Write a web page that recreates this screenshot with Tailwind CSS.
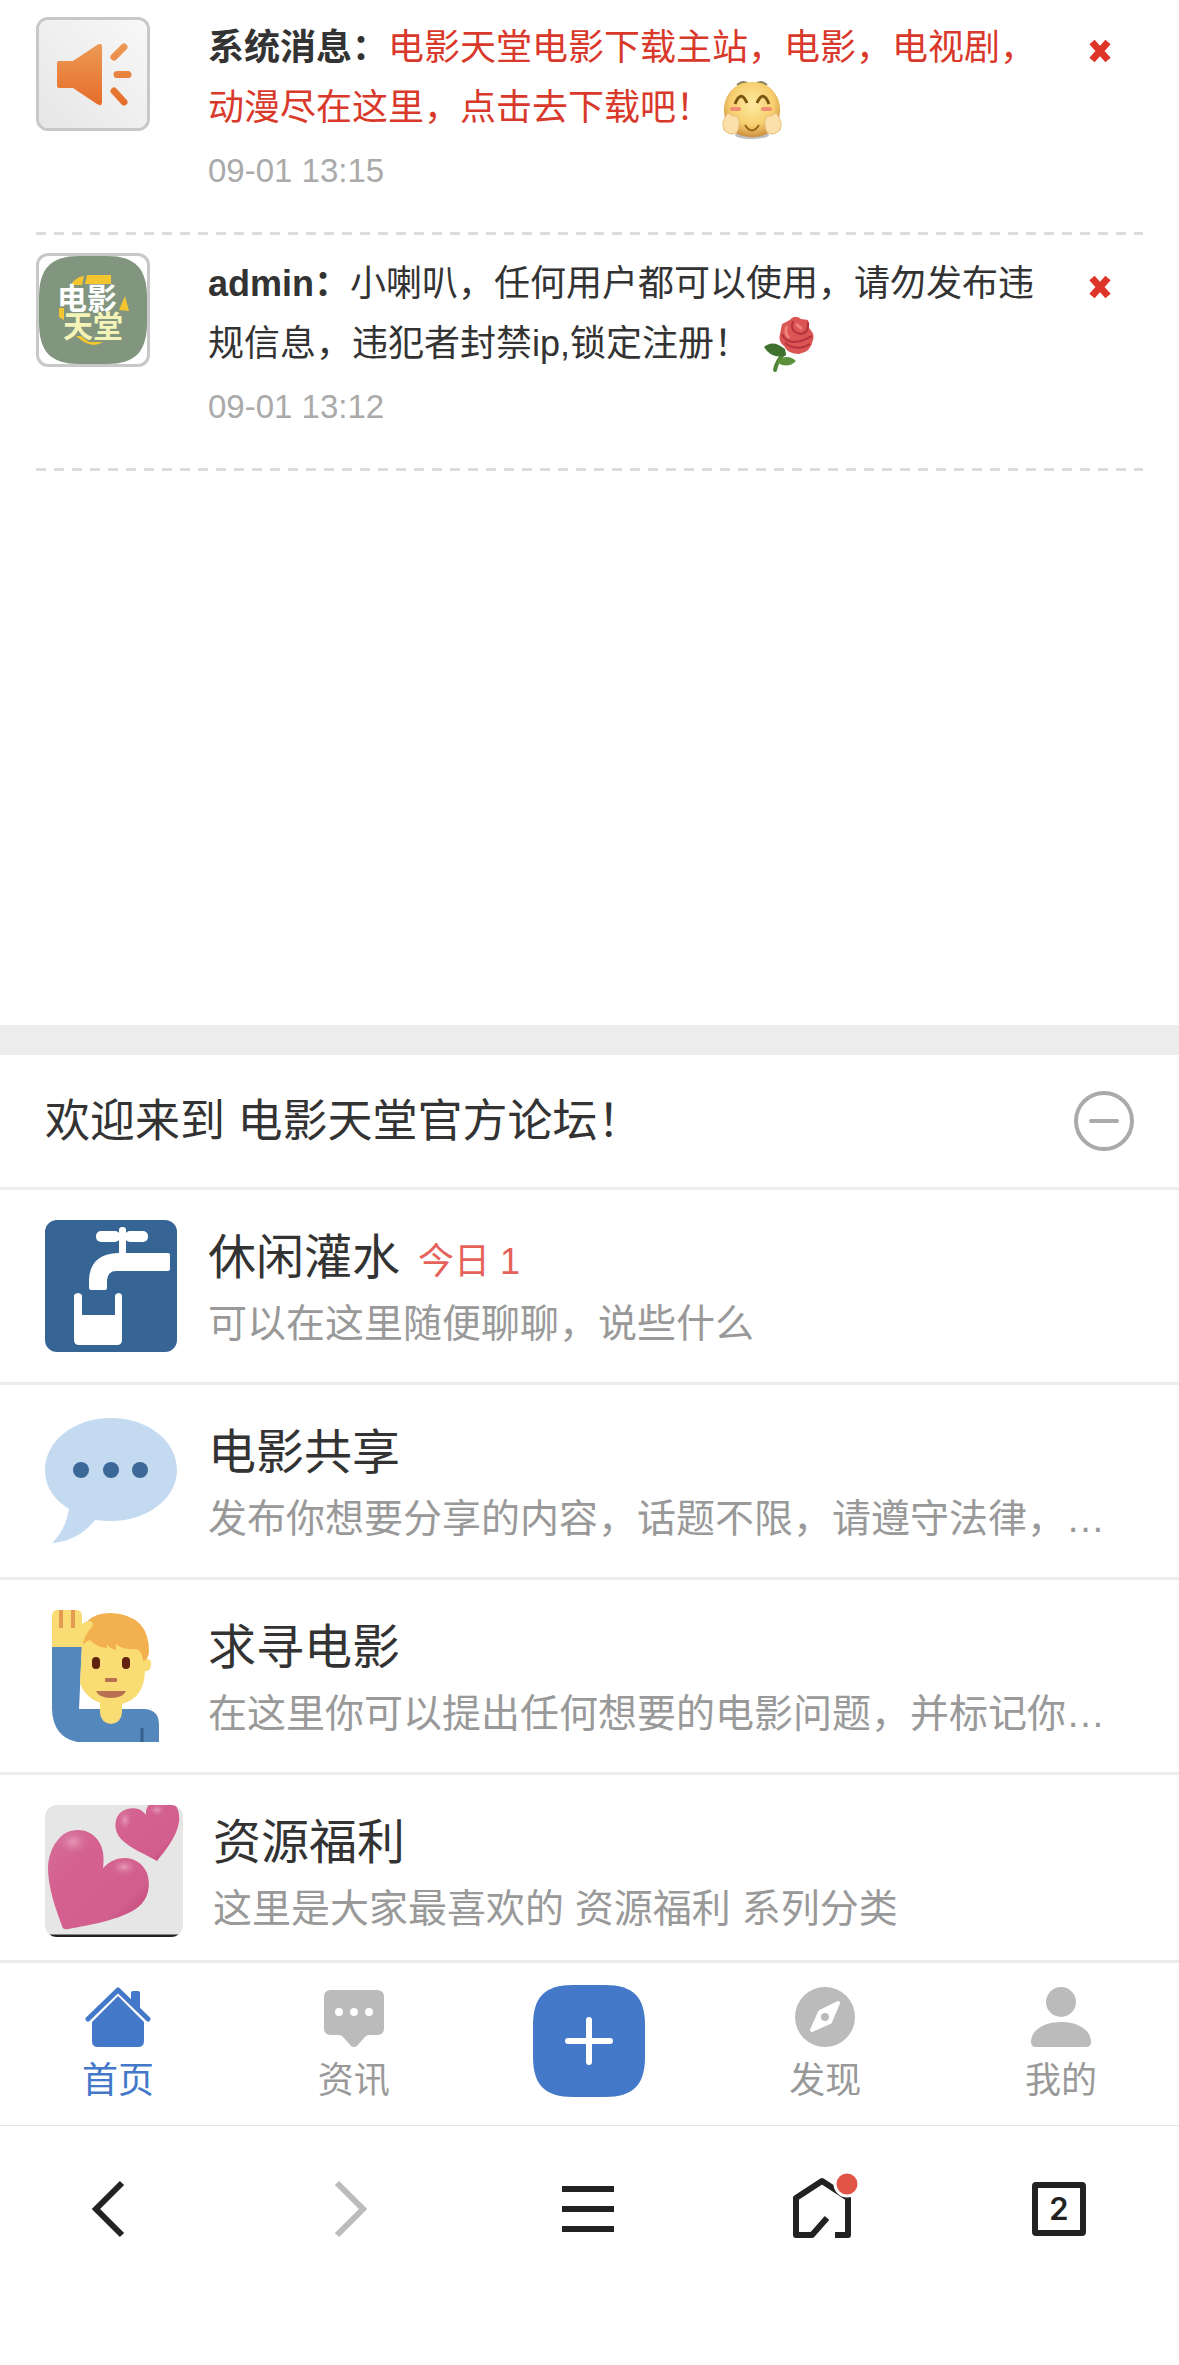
<!DOCTYPE html>
<html lang="zh-CN">

<head>
  <meta charset="UTF-8">
  <meta name="viewport" content="width=device-width, initial-scale=1.0">
  <title>电影天堂官方论坛</title>
  <script src="https://cdn.jsdelivr.net/npm/@tailwindcss/browser@4"></script>
</head>

<body class="min-h-screen flex flex-col bg-white text-[#333] font-['Liberation_Sans','Noto_Sans_CJK_SC',sans-serif]">
  <!-- Messages -->
  <section class="min-h-[1025px] px-9">
    <article class="flex items-start pt-[17px]">
      <svg class="w-[114px] h-[114px] shrink-0 border-3 border-[#c8c8c8] rounded-xl" viewBox="0 0 108 108">
        <defs>
          <linearGradient id="paper" x1="1" y1="0" x2="0" y2="1">
            <stop offset="0" stop-color="#f8f8f8" />
            <stop offset="1" stop-color="#e6e6e6" />
          </linearGradient>
          <linearGradient id="orange" x1="0" y1="24" x2="0" y2="86" gradientUnits="userSpaceOnUse">
            <stop offset="0" stop-color="#ec9a55" />
            <stop offset="1" stop-color="#e66c29" />
          </linearGradient>
        </defs>
        <rect width="108" height="108" rx="9" fill="url(#paper)" />
        <path d="M20 41H34L58 25Q63 22 63 27V82Q63 87 58 84L34 68H20Q18 68 18 66V43Q18 41 20 41Z" fill="url(#orange)" />
        <path d="M75 37L85 27M78 54.500H89M75 71L85 82" fill="none" stroke="url(#orange)" stroke-width="7" stroke-linecap="round" />
      </svg>
      <div class="flex-1 ml-[58px] pt-px">
        <p class="text-4xl/[60px]">
          <b>系统消息：</b><a href="#" class="text-[#d9392b]">电影天堂电影下载主站，电影，电视剧，动漫尽在这里，点击去下载吧！</a>
          <svg class="inline-block w-[60px] h-[60px] -my-3 align-middle" viewBox="0 0 60 60">
            <defs>
              <radialGradient id="face" cx=".5" cy=".4" r=".6">
                <stop offset="0" stop-color="#fdeaa0" />
                <stop offset=".65" stop-color="#f7cf6e" />
                <stop offset="1" stop-color="#cf9040" />
              </radialGradient>
            </defs>
            <ellipse cx="30" cy="55" rx="17" ry="4" fill="#777" opacity=".5" />
            <path d="M15 5Q22 -1 27 5M33 5Q38 -1 45 5" fill="#e9c465" stroke="#8a8161" stroke-width="2" />
            <path d="M30 2C48 2 59 16 58 32C57 48 46 57 30 57C14 57 3 48 2 32C1 16 12 2 30 2Z" fill="url(#face)" />
            <path d="M13 24Q19 9 25 23M35 23Q41 9 47 24" fill="none" stroke="#7a5412" stroke-width="3" />
            <path d="M23 45Q30 56 37 45" fill="none" stroke="#936018" stroke-width="2" />
            <path d="M10 29H17M41 29H48" stroke="#f08c72" stroke-width="4" stroke-linecap="round" />
            <path d="M4 36Q6 31 9 35L16 37Q19 47 14 53Q8 56 2 50Q-1 43 4 36ZM56 36Q54 31 51 35L44 37Q41 47 46 53Q52 56 58 50Q61 43 56 36Z" fill="#fbe0aa" stroke="#e8c180" />
          </svg>
        </p>
        <time class="block text-[33px]/[66px]">
          <span class="text-[#aaa]">09-01 13:15</span>
        </time>
      </div>
      <button class="w-[86px] h-[68px] flex items-center justify-center" aria-label="删除">
        <svg class="w-7 h-7" viewBox="0 0 28 28">
          <path d="M6 5L22 23M22 5L6 23" stroke="#dd3527" stroke-width="7" />
        </svg>
      </button>
    </article>
    <div class="mt-[28px] h-[3px] bg-[repeating-linear-gradient(90deg,#ddd_0_10px,transparent_10px_18px)]"></div>

    <article class="flex items-start pt-[18px]">
      <svg class="w-[114px] h-[114px] shrink-0 border-3 border-[#c8c8c8] rounded-xl" viewBox="0 0 108 108">
        <path d="M40 0H68C97 0 108 13 108 42V66C108 95 97 108 68 108H40C11 108 0 95 0 66V42C0 13 11 0 40 0Z" fill="#81957f" />
        <path d="M48 19H72V28H46ZM33 27Q39 20 45 20L43 29H33ZM80 54L86 40L90 55ZM20 52H25V64L20 61ZM37 80Q52 94 64 86L50 86L42 80Z" fill="#f3c62f" />
        <g font-family="Noto Sans CJK SC, sans-serif" font-weight="700">
          <text x="18" y="53" font-size="30" fill="#fff">电影</text>
          <text x="24" y="81" font-size="30" fill="#f5f4b8">天堂</text>
        </g>
      </svg>
      <div class="flex-1 ml-[58px] pt-px">
        <p class="text-4xl/[60px]">
          <b>admin：</b>小喇叭，任何用户都可以使用，请勿发布违规信息，违犯者封禁ip,锁定注册！
          <svg class="inline-block w-[60px] h-[60px] -my-3 align-middle" viewBox="0 0 60 60">
            <path d="M24 38Q17 44 15 54" fill="none" stroke="#4f8638" stroke-width="4" stroke-linecap="round" />
            <path d="M4 31Q13 23 25 33L26 39Q12 44 4 31Z" fill="#3f722e" />
            <path d="M18 45Q27 37 36 45Q28 53 18 47Z" fill="#5c913b" />
            <path d="M22 8Q29 5 32 2Q36 -1 41 3L48 4L49 12Q55 18 53 24Q51 36 39 38Q28 38 24 30Q18 26 20 18Z" fill="#dc5555" />
            <path d="M33 5Q29 16 41 18Q49 17 48 6M22 18Q27 30 44 24L52 20" fill="none" stroke="#b5343c" stroke-width="2" />
            <path d="M25 27Q37 36 50 28" fill="none" stroke="#b5343c" stroke-width="2" />
            <path d="M27 10Q24 17 29 22M36 8L42 13" fill="none" stroke="#ee817c" stroke-width="3" />
          </svg>
        </p>
        <time class="block text-[33px]/[66px]">
          <span class="text-[#aaa]">09-01 13:12</span>
        </time>
      </div>
      <button class="w-[86px] h-[68px] flex items-center justify-center" aria-label="删除">
        <svg class="w-7 h-7" viewBox="0 0 28 28">
          <path d="M6 5L22 23M22 5L6 23" stroke="#dd3527" stroke-width="7" />
        </svg>
      </button>
    </article>
    <div class="mt-[28px] h-[3px] bg-[repeating-linear-gradient(90deg,#ddd_0_10px,transparent_10px_18px)]"></div>
  </section>

  <!-- Forums -->
  <main class="border-t-[30px] border-[#ededed]">
    <header class="flex items-center justify-between h-[135px] px-[45px] border-b-3 border-[#ededed]">
      <h1 class="pt-0.5 text-[45px]/[60px]">欢迎来到 电影天堂官方论坛！</h1>
      <button aria-label="收起">
        <svg class="w-[60px] h-[60px]" viewBox="0 0 60 60" fill="none" stroke="#aaa" stroke-width="4" stroke-linecap="round">
          <circle cx="30" cy="30" r="28" />
          <path d="M17 30H43" />
        </svg>
      </button>
    </header>
    <ul>
      <li class="border-b-3 border-[#ededed]">
        <a href="#" class="flex items-center gap-[31px] px-[45px] py-[30px]">
          <svg class="w-[132px] h-[132px] shrink-0 rounded-xl" viewBox="0 0 132 132">
            <rect width="132" height="132" fill="#366494" />
            <g fill="#fff">
              <rect x="51" y="11" width="24" height="11" rx="5" />
              <rect x="80" y="11" width="23" height="11" rx="5" />
              <rect x="74" y="7" width="7" height="28" rx="3" />
              <path d="M73 33H123Q125 33 125 35V49Q125 51 123 51H71Q63 51 62 60V68Q62 70 60 70H46Q44 70 44 68V60Q45 34 73 33Z" />
              <path d="M29 75Q33 71 37 75V95H70V75Q74 71 77 75V120Q77 125 72 125H34Q29 125 29 120Z" />
            </g>
          </svg>
          <div class="min-w-0 flex-1">
            <div class="flex items-baseline gap-[18px]">
              <h2 class="text-5xl/[76px]">休闲灌水</h2>
              <span class="text-4xl text-[#e5625b]">今日 1</span>
            </div>
            <p class="truncate text-[39px]/[56px] text-[#999]">可以在这里随便聊聊，说些什么</p>
          </div>
        </a>
      </li>
      <li class="border-b-3 border-[#ededed]">
        <a href="#" class="flex items-center gap-[31px] px-[45px] py-[30px]">
          <svg class="w-[132px] h-[132px] shrink-0" viewBox="0 0 132 132">
            <path d="M66 3C103 3 132 26 132 55C132 83 103 106 66 106Q58 106 50 105C40 118 26 126 9 128Q7 128 9 126Q21 113 24 94Q0 79 0 55C0 26 29 3 66 3Z" fill="#c3daf1" />
            <g fill="#3b6896">
              <circle cx="36" cy="55" r="8" />
              <circle cx="66" cy="55" r="8" />
              <circle cx="95" cy="55" r="8" />
            </g>
          </svg>
          <div class="min-w-0 flex-1">
            <h2 class="text-5xl/[76px]">电影共享</h2>
            <p class="truncate text-[39px]/[56px] text-[#999]">发布你想要分享的内容，话题不限，请遵守法律，…</p>
          </div>
        </a>
      </li>
      <li class="border-b-3 border-[#ededed]">
        <a href="#" class="flex items-center gap-[31px] px-[45px] py-[30px]">
          <svg class="w-[132px] h-[132px] shrink-0" viewBox="0 0 132 132">
            <path d="M7 35H37L34 99H100Q114 100 114 115V132H32Q8 127 7 99Z" fill="#5487bc" />
            <path d="M97 118V132" stroke="#34608f" stroke-width="3" />
            <path d="M55 90H77V103Q76 113 66 114Q56 113 55 103Z" fill="#f9dc73" />
            <path d="M37 34Q40 10 68 8Q96 10 101 49Q107 48 106 55Q105 62 100 61Q99 94 67 95Q42 93 35 73Z" fill="#f9dc73" />
            <path d="M36 36Q34 3 66 3Q105 5 104 43Q102 51 98 51Q97 40 91 39Q77 40 71 34L71 40Q64 38 62 34L62 38Q51 37 45 30Q39 32 36 37Z" fill="#f3b04f" />
            <path d="M7 37V6Q7 0 13 0H31Q37 0 37 6V14Q43 9 47 12Q49 14 46 18Q40 24 37 37Z" fill="#f9dc73" />
            <path d="M16 0V18M28 0V18" stroke="#e39a51" stroke-width="4" />
            <rect x="47" y="47" width="8" height="12" rx="4" fill="#61210f" />
            <rect x="77" y="47" width="8" height="12" rx="4" fill="#61210f" />
            <rect x="60" y="68" width="12" height="4" rx="1" fill="#b96f52" />
            <path d="M51 81H81Q78 88 66 88Q54 88 51 81Z" fill="#b96f52" />
          </svg>
          <div class="min-w-0 flex-1">
            <h2 class="text-5xl/[76px]">求寻电影</h2>
            <p class="truncate text-[39px]/[56px] text-[#999]">在这里你可以提出任何想要的电影问题，并标记你…</p>
          </div>
        </a>
      </li>
      <li>
        <a href="#" class="flex items-center gap-[30px] px-[45px] pt-[30px] pb-[23px]">
          <svg class="w-[138px] h-[132px] shrink-0 rounded-xl" viewBox="0 0 138 132">
            <defs>
              <linearGradient id="pink" x1="0" y1="0" x2="1" y2="1">
                <stop offset="0" stop-color="#d6709b" />
                <stop offset=".3" stop-color="#d4618f" />
                <stop offset=".75" stop-color="#d25e8d" />
                <stop offset="1" stop-color="#b9386a" />
              </linearGradient>
              <radialGradient id="shine">
                <stop offset="0" stop-color="#e79ab6" />
                <stop offset="1" stop-color="#d6709b" stop-opacity="0" />
              </radialGradient>
            </defs>
            <rect width="138" height="132" fill="#e6e6e6" />
            <path d="M0 131H138" stroke="#222" stroke-width="3" />
            <path d="M58 63C62 38 48 25 33 25C15 25 4 43 3 62C3 84 11 104 17 121Q18 125 23 124C45 120 75 115 92 103C104 94 106 80 102 68C95 51 73 47 58 63Z" fill="url(#pink)" />
            <path d="M101 10C95 1 83 2 76 7C68 14 69 27 76 34C86 44 100 49 112 56C119 47 132 32 134 17C136 1 126 -8 115 -6C107 -5 100 1 101 10Z" fill="url(#pink)" />
            <ellipse cx="28" cy="37" rx="16" ry="12" fill="url(#shine)" />
            <ellipse cx="79" cy="62" rx="14" ry="9" fill="url(#shine)" />
            <ellipse cx="80" cy="15" rx="7" ry="10" fill="url(#shine)" />
            <ellipse cx="112" cy="5" rx="8" ry="6" fill="url(#shine)" />
          </svg>
          <div class="min-w-0 flex-1">
            <h2 class="text-5xl/[76px]">资源福利</h2>
            <p class="truncate text-[39px]/[56px] text-[#999]">这里是大家最喜欢的 资源福利 系列分类</p>
          </div>
        </a>
      </li>
    </ul>
  </main>

  <!-- Site navigation -->
  <nav class="grid grid-cols-5 h-[166px] border-t-3 border-b border-t-[#ebebeb] border-b-[#e5e5e5] text-4xl/[60px] text-[#999]">
    <a href="#" class="flex flex-col items-center pt-6 gap-1 text-[#4478c9]">
      <svg class="w-[66px] h-[60px]" viewBox="0 0 66 60" fill="currentColor">
        <path d="M46 16V6Q46 4 48 4H53Q55 4 55 6V25Z" />
        <path d="M3 32L33 3L63 32" fill="none" stroke="currentColor" stroke-width="5" stroke-linecap="round" stroke-linejoin="round" />
        <path d="M33 9L59 35V54Q59 60 53 60H13Q7 60 7 54V35Z" />
      </svg>
      首页
    </a>
    <a href="#" class="flex flex-col items-center pt-6 gap-1">
      <svg class="w-[60px] h-[60px]" viewBox="0 0 60 60">
        <path d="M7 3H53Q60 3 60 10V41Q60 48 53 48H45Q42 48 40 51L33 59Q30 61 27 59L20 51Q18 48 15 48H7Q0 48 0 41V10Q0 3 7 3Z" fill="#bbb" />
        <g fill="#fff">
          <circle cx="15" cy="25" r="4" />
          <circle cx="30" cy="25" r="4" />
          <circle cx="45" cy="25" r="4" />
        </g>
      </svg>
      资讯
    </a>
    <a href="#" class="flex flex-col items-center pt-[22px]" aria-label="发布">
      <svg class="w-28 h-28" viewBox="0 0 112 112">
        <path d="M40 0H72C100 0 112 12 112 40V72C112 100 100 112 72 112H40C12 112 0 100 0 72V40C0 12 12 0 40 0Z" fill="#4478c9" />
        <path d="M35 56H77M56 35V77" stroke="#fff" stroke-width="6" stroke-linecap="round" />
      </svg>
    </a>
    <a href="#" class="flex flex-col items-center pt-6 gap-1">
      <svg class="w-[60px] h-[60px]" viewBox="0 0 60 60">
        <circle cx="30" cy="30" r="30" fill="#bbb" />
        <path d="M43 16L35 35L17 43L25 25Z" fill="#fff" stroke="#fff" stroke-width="4" stroke-linejoin="round" />
        <circle cx="30" cy="30" r="4" fill="#bbb" />
      </svg>
      发现
    </a>
    <a href="#" class="flex flex-col items-center pt-6 gap-1">
      <svg class="w-[60px] h-[60px]" viewBox="0 0 60 60" fill="#bbb">
        <circle cx="30" cy="15" r="15" />
        <path d="M0 55C0 43 13 35 30 35S60 43 60 55Q60 60 55 60H5Q0 60 0 55Z" />
      </svg>
      我的
    </a>
  </nav>

  <!-- Browser toolbar -->
  <footer class="flex-1 grid grid-cols-5 justify-items-center items-start pt-12">
    <button aria-label="后退">
      <svg class="w-[70px] h-[70px]" viewBox="0 0 70 70">
        <path d="M39 9L13 35L39 61" fill="none" stroke="#222" stroke-width="6" />
      </svg>
    </button>
    <button aria-label="前进">
      <svg class="w-[70px] h-[70px]" viewBox="0 0 70 70">
        <path d="M18 9L44 35L18 61" fill="none" stroke="#bbb" stroke-width="6" />
      </svg>
    </button>
    <button aria-label="菜单">
      <svg class="w-[70px] h-[70px]" viewBox="0 0 70 70">
        <path d="M8 15H60M8 35H60M8 55H60" stroke="#222" stroke-width="6" />
      </svg>
    </button>
    <button aria-label="主页">
      <svg class="w-[70px] h-[70px] overflow-visible" viewBox="0 0 70 70">
        <path d="M37 44L22 61H6V24L32 7L58 24V61H45" fill="none" stroke="#222" stroke-width="6" stroke-linejoin="round" />
        <circle cx="57" cy="10" r="12" fill="#e05545" stroke="#fff" stroke-width="3" />
      </svg>
    </button>
    <button aria-label="标签页">
      <svg class="w-[70px] h-[70px]" viewBox="0 0 70 70">
        <rect x="9" y="11" width="48" height="48" rx="1" fill="none" stroke="#222" stroke-width="6" />
        <text x="33" y="46" font-family="Inter, sans-serif" font-size="31" font-weight="600" text-anchor="middle" fill="#222">2</text>
      </svg>
    </button>
  </footer>
</body>

</html>
